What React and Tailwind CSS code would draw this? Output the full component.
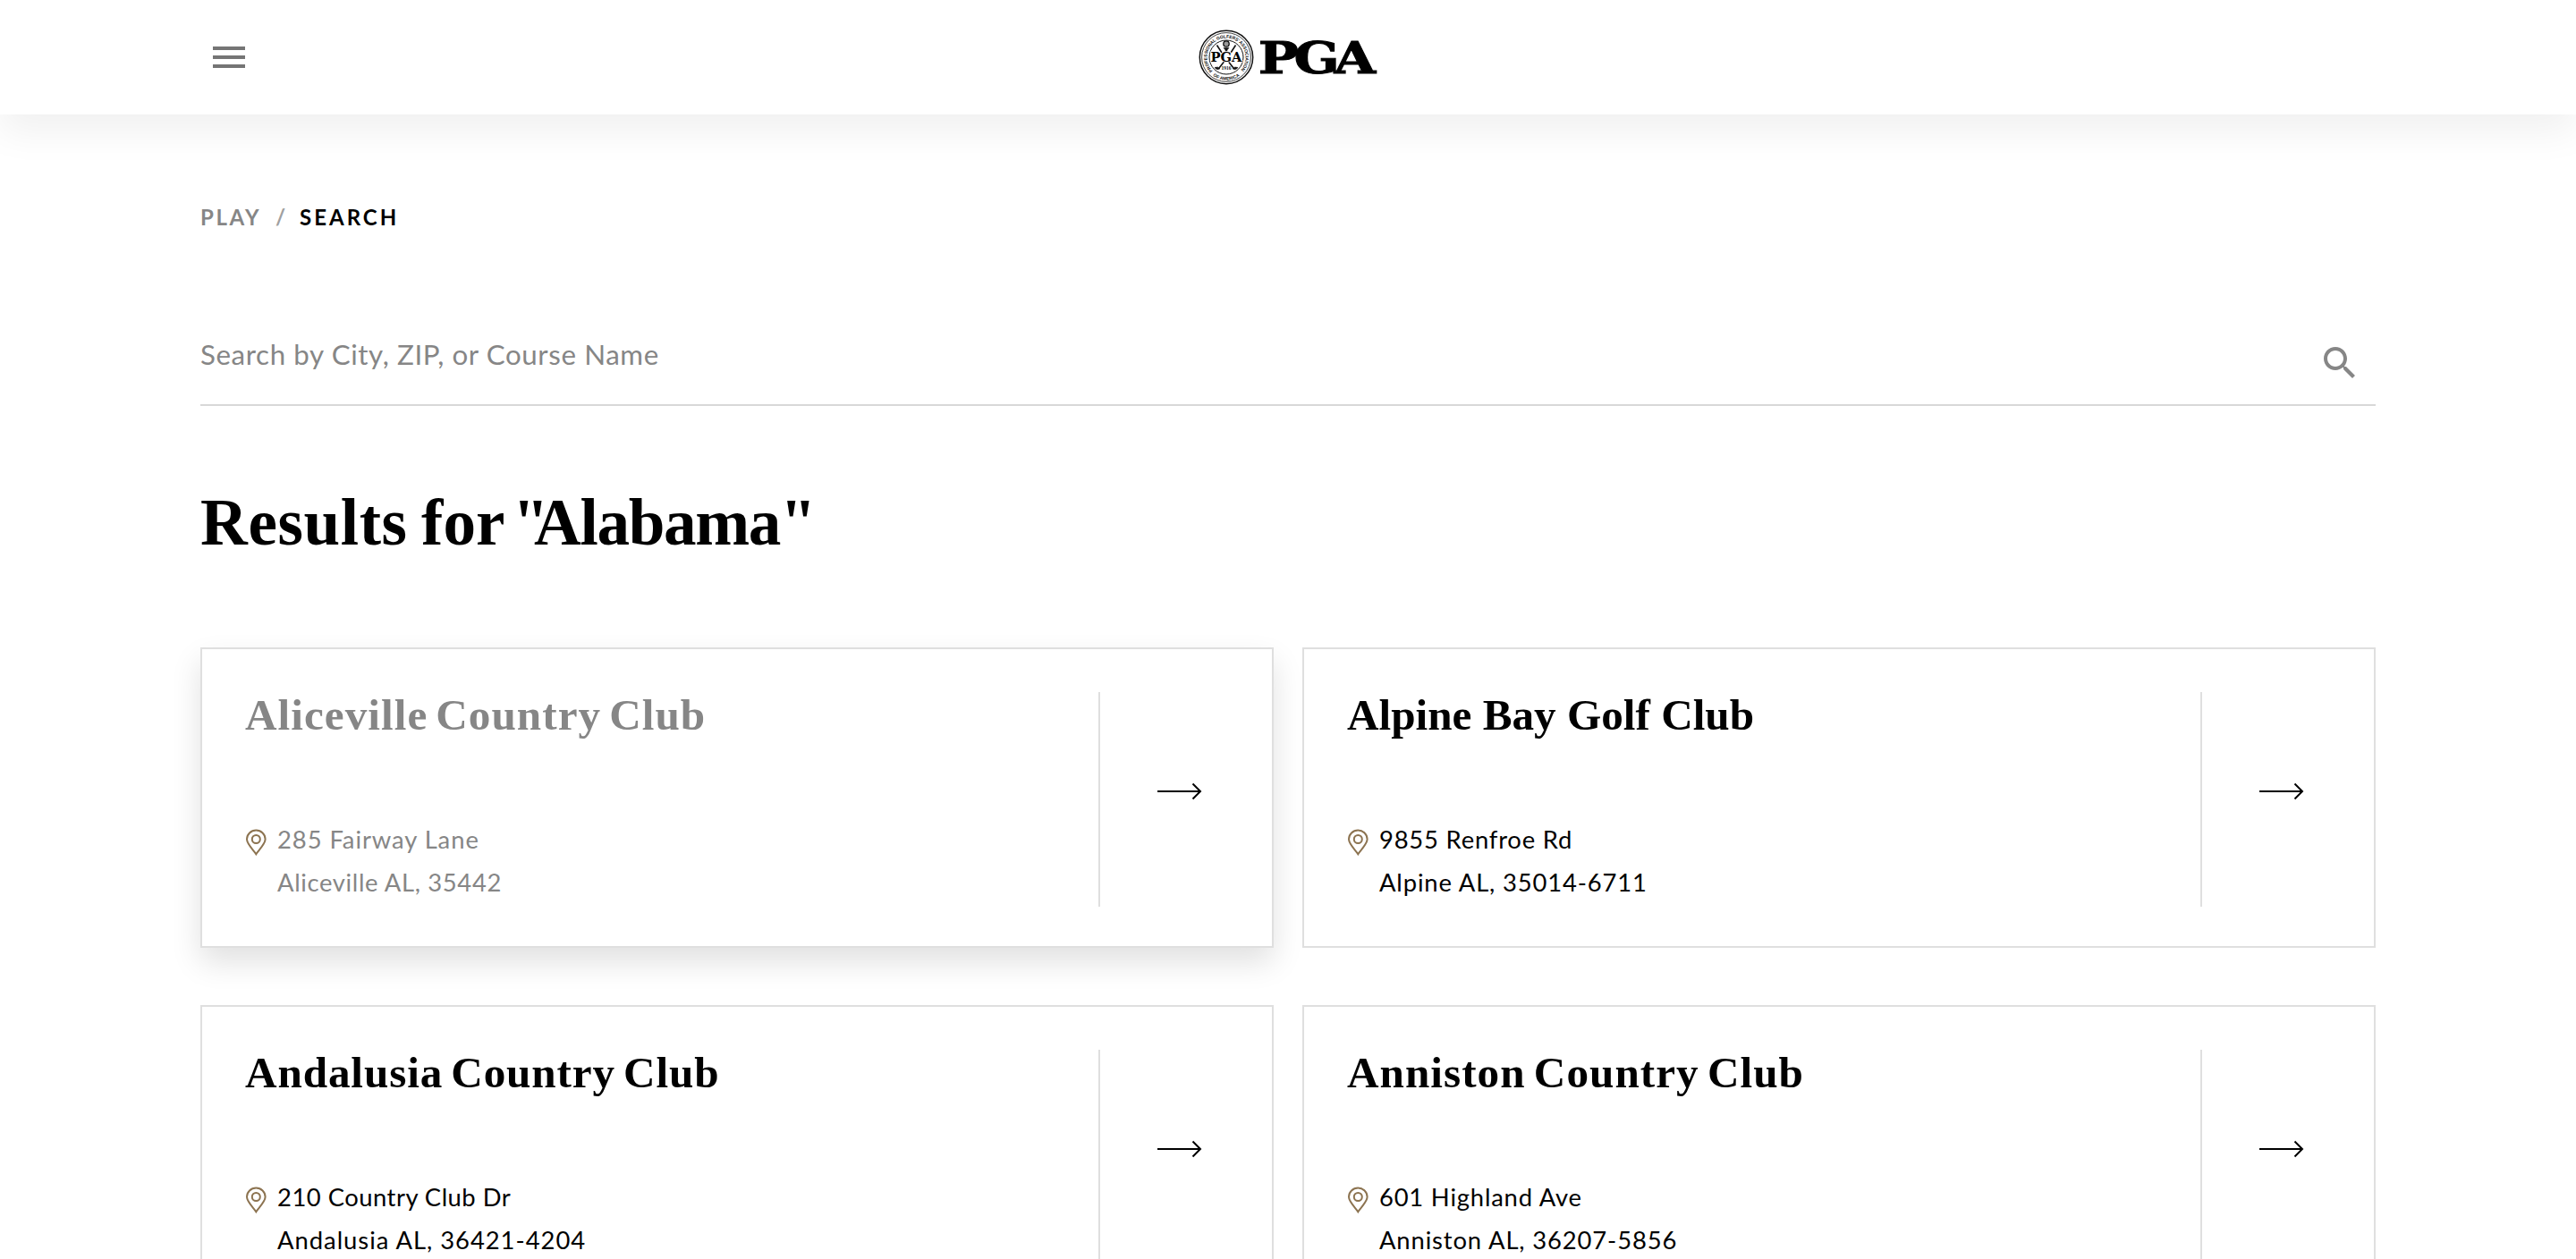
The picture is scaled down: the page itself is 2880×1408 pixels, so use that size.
const courses = [
  {
    name: "Aliceville Country Club",
    nameTracking: "tracking-[1.04px] [word-spacing:-4.4px]",
    street: "285 Fairway Lane",
    streetTracking: "tracking-[0.93px]",
    city: "Aliceville AL, 35442",
    cityTracking: "tracking-[0.65px]",
    active: true,
  },
  {
    name: "Alpine Bay Golf Club",
    nameTracking: "tracking-normal",
    street: "9855 Renfroe Rd",
    streetTracking: "tracking-[0.8px]",
    city: "Alpine AL, 35014-6711",
    cityTracking: "tracking-[0.863px]",
  },
  {
    name: "Andalusia Country Club",
    nameTracking: "tracking-[0.887px] [word-spacing:-4.2px]",
    street: "210 Country Club Dr",
    streetTracking: "tracking-[0.5px]",
    city: "Andalusia AL, 36421-4204",
    cityTracking: "tracking-[0.98px]",
  },
  {
    name: "Anniston Country Club",
    nameTracking: "tracking-[1.02px] [word-spacing:-4px]",
    street: "601 Highland Ave",
    streetTracking: "tracking-[0.8px]",
    city: "Anniston AL, 36207-5856",
    cityTracking: "tracking-[0.87px]",
  },
];

function Seal() {
  return (
    <svg viewBox="-32 -32 64 64" className="size-16" fill="none" stroke="#111">
      <defs>
        <path id="seal-top" d="M-15.2 15.2A21.5 21.5 0 1 1 15.2 15.2" />
        <path id="seal-bottom" d="M-18.1 18.1A25.6 25.6 0 0 0 18.1 18.1" />
      </defs>
      <circle r="29.7" strokeWidth="1.5" />
      <circle r="27.4" strokeWidth="0.8" />
      <circle r="19" strokeWidth="1" />
      <g fill="#111" stroke="none" fontFamily="'Liberation Sans', Arial, sans-serif" fontWeight="700" fontSize="5">
        <text textLength="99">
          <textPath href="#seal-top">PROFESSIONAL GOLFERS’ ASSOCIATION</textPath>
        </text>
        <text textAnchor="middle">
          <textPath href="#seal-bottom" startOffset="50%">OF AMERICA</textPath>
        </text>
      </g>
      <path d="M-10.5-13.5-5-5M10.5-13.5 5-5M-2.5 5-8 12M2.5 5 8 12" strokeWidth="1.6" />
      <path d="M-13 11.5q4-1.5 6 1.3-4 2.2-6-1.3ZM13 11.5q-4-1.5-6 1.3 4 2.2 6-1.3Z" fill="#111" strokeWidth="0.6" />
      <circle cy="-15" r="3.2" fill="#999" strokeWidth="1.3" />
      <path d="M-3-10.5H3L.9-8V-5H-.9V-8Z" fill="#111" strokeWidth="0.6" />
      <text
        x="0"
        y="5.2"
        textAnchor="middle"
        textLength="35"
        lengthAdjust="spacingAndGlyphs"
        fill="#000"
        stroke="#fff"
        strokeWidth="1.6"
        paintOrder="stroke"
        fontFamily="'DejaVu Serif', serif"
        fontWeight="700"
        fontSize="14.5"
      >
        PGA
      </text>
      <text x="0" y="14" textAnchor="middle" fill="#111" stroke="none" fontFamily="'Liberation Serif', serif" fontWeight="700" fontSize="5.5">
        1916
      </text>
    </svg>
  );
}

function Logo() {
  return (
    <div className="flex items-center">
      <Seal />
      <svg viewBox="0 0 138 64" className="h-16 w-[138px]">
        <text
          transform="translate(6 49.5) scale(1.25 1)"
          x="-1.8 30 66"
          y="0"
          fontFamily="'DejaVu Serif', serif"
          fontWeight="700"
          fontSize="48"
          stroke="#000"
          strokeWidth="1"
        >
          PGA
        </text>
      </svg>
    </div>
  );
}

function Pin() {
  return (
    <svg viewBox="0 0 24 30" className="mt-3 h-[30px] w-6 shrink-0" fill="none" stroke="#8c7350" strokeWidth="2">
      <path d="M12.3 28.2C9.8 24 2 17.2 2 11.6A10.3 10.1 0 0 1 22.6 11.6C22.6 17.2 14.8 24 12.3 28.2Z" />
      <circle cx="12.3" cy="11.5" r="4.5" />
    </svg>
  );
}

function Arrow() {
  return (
    <svg viewBox="0 0 50 20" className="mb-[18px] h-5 w-[50px]" fill="none" stroke="#000" strokeWidth="2">
      <path d="M0 10H47.5M39.5 1.5 48 10 39.5 18.5" />
    </svg>
  );
}

function CourseCard({ course }) {
  return (
    <a
      className={
        course.active
          ? "flex h-[336px] border-2 border-[#dfdfdf] bg-white pt-12 pb-11 pl-12 text-[#868686] shadow-[0_16px_32px_rgba(0,0,0,0.12)]"
          : "flex h-[336px] border-2 border-[#dfdfdf] bg-white pt-12 pb-11 pl-12 text-black"
      }
    >
      <div className="flex flex-1 flex-col justify-between pb-[3px]">
        <h2
          className={`font-['Liberation_Serif',serif] text-[49.2px] leading-[52px] font-bold whitespace-nowrap ${course.nameTracking}`}
        >
          {course.name}
        </h2>
        <div className="flex gap-3 font-[Lato,sans-serif] text-[27.4px] leading-[48px] whitespace-nowrap">
          <Pin />
          <div>
            <p className={course.streetTracking}>{course.street}</p>
            <p className={course.cityTracking}>{course.city}</p>
          </div>
        </div>
      </div>
      <div className="flex w-[194px] items-center border-l-2 border-[#dfdfdf] pl-16">
        <Arrow />
      </div>
    </a>
  );
}

export default function App() {
  return (
    <div className="h-[1408px] overflow-hidden bg-white">
      <header className="grid h-32 grid-cols-[1fr_auto_1fr] items-center bg-white px-[238px] shadow-[0_20px_40px_rgba(0,0,0,0.06)]">
        <button className="flex w-9 flex-col gap-1.5" aria-label="Menu">
          <span className="h-1 bg-[#757575]" />
          <span className="h-1 bg-[#757575]" />
          <span className="h-1 bg-[#757575]" />
        </button>
        <Logo />
      </header>
      <main className="mx-auto w-[2432px]">
        <nav className="mt-[99px] flex font-[Lato,sans-serif] text-[24px] leading-8 font-bold">
          <span className="w-[84px] tracking-[2.6px] text-[#868686]">PLAY</span>
          <span className="w-[27px] text-[#a0a0a0]">/</span>
          <span className="tracking-[3px] text-black">SEARCH</span>
        </nav>
        <div className="mt-[113px] flex h-[82px] justify-between border-b-2 border-[#d8d8d8] pr-4">
          <span className="font-[Lato,sans-serif] text-[31.3px] leading-[48px] tracking-[0.6px] text-[#868686]">
            Search by City, ZIP, or Course Name
          </span>
          <svg viewBox="0 0 24 24" className="mt-2.5 size-12" fill="#868686">
            <path d="M15.5 14h-.79l-.28-.27C15.41 12.59 16 11.11 16 9.5 16 5.91 13.09 3 9.5 3S3 5.91 3 9.5 5.91 16 9.5 16c1.61 0 3.09-.59 4.23-1.57l.27.28v.79l5 4.99L20.49 19l-4.99-5zm-6 0C7.01 14 5 11.99 5 9.5S7.01 5 9.5 5 14 7.01 14 9.5 11.99 14 9.5 14z" />
          </svg>
        </div>
        <h1 className="mt-[91px] font-['Liberation_Serif',serif] text-[73.1px] leading-[80px] font-bold tracking-[-2.8px]">
          <span className="tracking-[0.6px]">Results</span> <span className="tracking-normal">for</span>{" "}
          <span className="-ml-[7px] tracking-[-16.6px]">"</span>
          <span className="tracking-[-1.3px]">Alabama"</span>
        </h1>
        <div className="mt-[99px] grid grid-cols-2 gap-x-8 gap-y-16">
          {courses.map((course) => (
            <CourseCard key={course.name} course={course} />
          ))}
        </div>
      </main>
    </div>
  );
}
